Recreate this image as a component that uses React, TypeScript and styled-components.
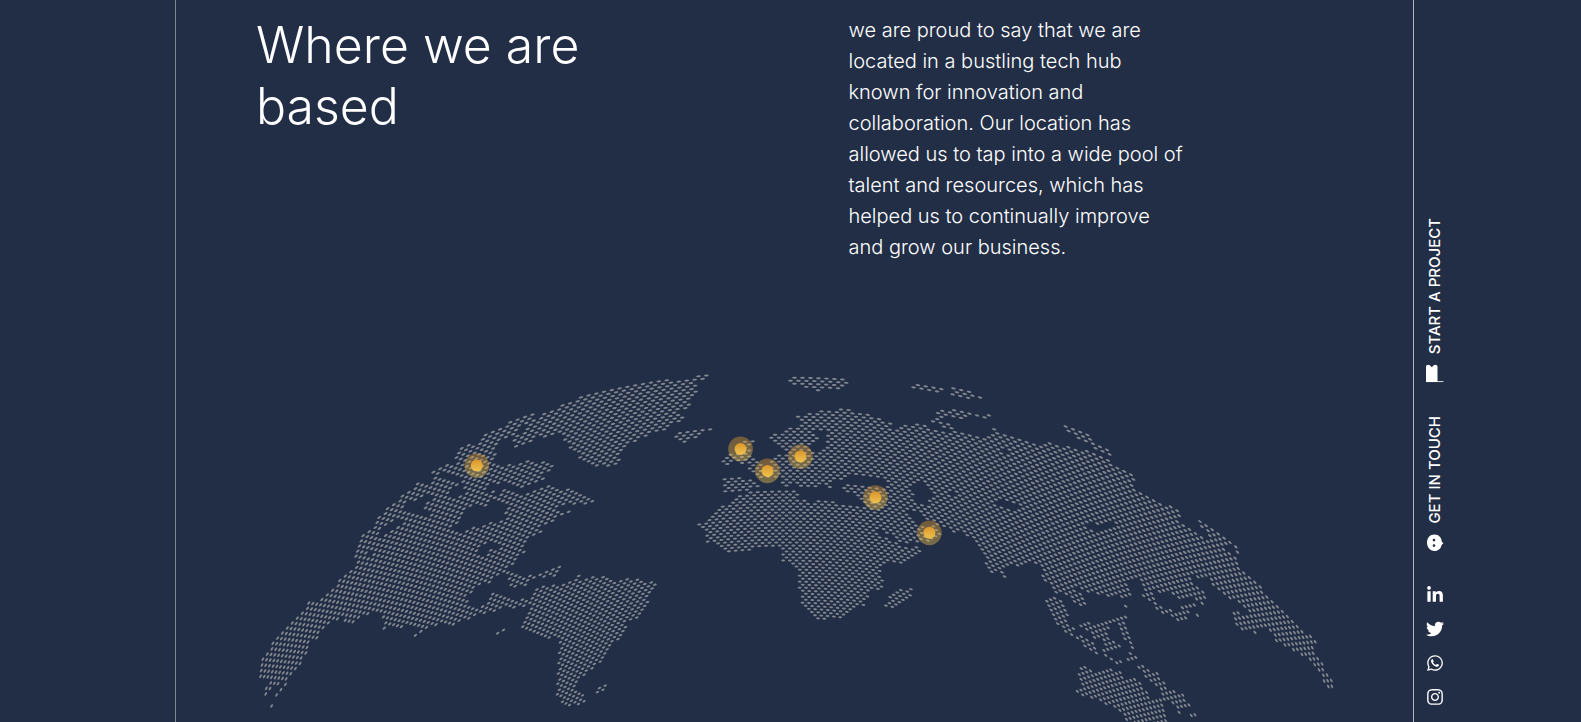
import React from "react";
import styled, { createGlobalStyle } from "styled-components";
import { FaLinkedinIn, FaTwitter, FaWhatsapp, FaInstagram } from "react-icons/fa";

type Point = [number, number];

const GlobalStyle = createGlobalStyle`
  *, *::before, *::after { box-sizing: border-box; }
  body {
    margin: 0;
    background: #222e46;
    color: #fff;
    font-family: Inter, "Liberation Sans", sans-serif;
  }
`;

const Page = styled.div`
  display: grid;
  grid-template-columns: 175px minmax(0, 1fr) 167px;
  min-height: 100vh;
`;

const Section = styled.main`
  grid-column: 2;
  display: flex;
  flex-direction: column;
  justify-content: space-between;
  gap: 96px;
  padding-top: 15px;
  border-left: 1px solid #7d8493;
  border-right: 1px solid #b0b5be;
`;

const Intro = styled.div`
  display: grid;
  grid-template-columns: 1fr 1fr;
  gap: 108px;
  padding: 0 80px;
`;

const Title = styled.h2`
  max-width: 400px;
  margin: 0;
  font-size: 50px;
  font-weight: 300;
  line-height: 61px;
`;

const Copy = styled.p`
  max-width: 336px;
  margin: 0;
  font-size: 20px;
  font-weight: 300;
  line-height: 31px;
`;

const MapBox = styled.svg`
  display: block;
  margin: 0 64px;
`;

const Rail = styled.aside`
  position: sticky;
  top: 0;
  height: 100vh;
  display: flex;
  flex-direction: column;
  justify-content: flex-end;
  align-items: flex-start;
  gap: 34px;
  padding: 0 0 16px 12px;
`;

const RailLink = styled.a`
  display: flex;
  align-items: center;
  gap: 10px;
  writing-mode: vertical-rl;
  transform: rotate(180deg);
  color: #fff;
  font-size: 15px;
  font-weight: 500;
  line-height: 18px;
  text-decoration: none;
`;

const Socials = styled.nav`
  display: flex;
  flex-direction: column;
  gap: 16px;
`;

const Social = styled.a`
  display: flex;
  color: #fff;
  font-size: 18px;
`;

/* The map is drawn in thirds of a pixel: a staggered grid bent over a globe. */
const MAP_W = 3330;
const MAP_H = 1086;
const CENTER_X = 1641;
const STEP = 0.0117;
const ROW = 9;
const BEND = 1680;
const DOT = 0.3;

const land: Point[][] = [
  [[60,905],[85,868],[105,833],[135,810],[165,776],[198,742],[208,723],[228,726],[245,708],[276,693],[285,673],[308,643],[330,628],[350,612],[358,598],[348,590],[343,570],[363,545],[360,535],[370,518],[390,506],[412,478],[440,448],[465,431],[485,405],[512,388],[535,362],[545,362],[550,375],[575,366],[584,352],[576,342],[590,323],[610,312],[645,314],[636,290],[665,261],[690,250],[715,257],[718,228],[765,204],[790,210],[810,186],[840,175],[877,157],[890,170],[835,207],[812,234],[782,260],[760,292],[752,312],[800,318],[845,304],[875,300],[898,304],[945,310],[948,316],[915,342],[920,362],[880,370],[852,382],[830,374],[800,378],[805,384],[840,398],[880,398],[905,378],[945,376],[980,387],[1015,403],[1064,422],[1050,434],[1005,432],[960,442],[950,458],[985,452],[990,460],[960,472],[938,490],[912,492],[902,522],[872,537],[858,550],[855,580],[828,597],[820,612],[802,634],[785,645],[740,672],[700,690],[685,712],[687,738],[712,742],[748,722],[740,706],[765,692],[782,698],[795,708],[818,706],[828,724],[855,718],[872,728],[870,735],[820,748],[790,745],[720,766],[680,782],[640,795],[580,797],[560,806],[530,836],[517,836],[540,812],[538,804],[440,799],[432,812],[426,810],[430,767],[380,762],[360,774],[330,792],[314,792],[314,780],[290,777],[270,792],[250,810],[240,827],[205,857],[198,890],[180,912],[165,928],[147,950],[142,975],[123,1000],[108,1015],[90,1052],[84,1050],[106,1005],[126,985],[128,965],[92,990],[75,1006],[72,1000],[85,968],[62,962],[50,980]],
  [[860,205],[880,180],[910,154],[940,150],[980,129],[1055,96],[1130,76],[1163,60],[1234,45],[1274,48],[1295,63],[1330,65],[1365,50],[1418,44],[1424,50],[1378,60],[1376,92],[1362,118],[1342,142],[1318,158],[1334,165],[1325,182],[1292,195],[1278,207],[1220,230],[1182,245],[1160,260],[1142,290],[1134,314],[1105,322],[1066,322],[1028,304],[1012,280],[988,272],[982,245],[960,226],[920,230],[890,232],[865,254],[824,260],[815,242]],
  [[780,622],[830,636],[870,648],[905,638],[935,630],[962,620],[968,628],[945,648],[900,656],[870,665],[850,682],[800,682],[810,655],[780,645]],
  [[870,725],[890,688],[930,673],[965,675],[980,663],[1000,658],[1003,643],[1015,643],[1025,663],[1063,650],[1095,648],[1130,660],[1165,653],[1200,655],[1225,663],[1262,670],[1247,690],[1232,705],[1226,740],[1202,772],[1165,786],[1157,815],[1127,847],[1100,882],[1087,902],[1060,922],[1047,942],[1020,956],[1012,990],[1042,1015],[1032,1037],[968,1042],[963,1012],[948,1000],[953,970],[948,945],[958,920],[953,890],[958,850],[953,834],[925,835],[880,820],[841,804],[853,775],[868,745]],
  [[762,825],[782,806],[792,810],[778,830]],
  [[1070,1000],[1080,980],[1108,970],[1108,980],[1082,1000]],
  [[1300,222],[1320,210],[1350,215],[1385,200],[1414,208],[1375,234],[1335,246],[1300,230]],
  [[1445,318],[1448,298],[1475,283],[1502,300],[1480,312]],
  [[1495,250],[1538,232],[1545,238],[1530,258],[1542,288],[1567,300],[1577,325],[1560,347],[1513,327],[1528,312],[1495,314]],
  [[1453,355],[1470,352],[1550,357],[1560,375],[1545,387],[1530,397],[1460,399],[1451,387]],
  [[1470,425],[1500,403],[1560,393],[1672,391],[1676,420],[1720,424],[1780,418],[1800,434],[1860,434],[1882,442],[1900,475],[1910,500],[1925,520],[1945,540],[1980,546],[1990,566],[2045,560],[2042,576],[2010,604],[2005,610],[1960,607],[1930,627],[1922,640],[1933,660],[1926,682],[1892,702],[1877,732],[1840,759],[1800,777],[1728,780],[1708,757],[1688,742],[1688,702],[1668,686],[1678,640],[1658,620],[1625,600],[1625,575],[1610,562],[1560,565],[1520,577],[1475,579],[1430,562],[1398,542],[1405,515],[1374,495],[1415,475],[1420,452]],
  [[1588,222],[1645,210],[1678,190],[1675,166],[1720,158],[1770,150],[1815,143],[1850,153],[1895,168],[1950,183],[1958,203],[1978,207],[1982,190],[2020,193],[2048,190],[2070,205],[2100,212],[2150,213],[2210,226],[2240,231],[2258,222],[2246,203],[2280,210],[2310,230],[2360,238],[2400,250],[2435,243],[2470,258],[2500,258],[2540,273],[2580,284],[2612,302],[2645,325],[2690,345],[2694,358],[2680,375],[2705,393],[2732,405],[2747,427],[2770,428],[2805,445],[2823,460],[2827,490],[2845,496],[2868,514],[2892,533],[2940,545],[2960,568],[2998,598],[3007,625],[3042,658],[3067,683],[3092,713],[3122,743],[3162,783],[3192,815],[3230,833],[3247,860],[3225,855],[3228,880],[3248,905],[3254,930],[3283,960],[3278,998],[3260,985],[3248,955],[3228,925],[3213,900],[3190,897],[3172,877],[3150,862],[3108,842],[3098,815],[3065,807],[3050,822],[3038,810],[2988,807],[2978,770],[2990,753],[3030,763],[3028,745],[2988,727],[2963,707],[2930,682],[2910,662],[2880,654],[2860,645],[2857,670],[2882,680],[2898,700],[2895,737],[2870,717],[2820,714],[2785,698],[2735,692],[2745,715],[2760,740],[2800,750],[2820,757],[2830,732],[2875,728],[2875,740],[2855,755],[2885,758],[2885,768],[2845,768],[2830,788],[2790,765],[2745,750],[2730,722],[2710,710],[2715,680],[2695,655],[2675,660],[2662,680],[2678,703],[2620,718],[2600,705],[2548,702],[2530,712],[2550,738],[2540,744],[2500,732],[2482,705],[2450,702],[2443,687],[2418,667],[2408,640],[2398,615],[2370,607],[2315,622],[2290,632],[2304,655],[2290,664],[2278,642],[2248,642],[2243,615],[2223,577],[2188,532],[2173,517],[2150,522],[2130,507],[2095,497],[2105,525],[2060,545],[1985,552],[1950,527],[1920,502],[1902,472],[1878,450],[1860,425],[1840,402],[1810,392],[1812,372],[1840,368],[1825,358],[1775,368],[1795,390],[1775,390],[1740,376],[1715,385],[1680,388],[1680,370],[1630,380],[1620,350],[1560,352],[1570,330],[1590,315],[1598,290],[1640,277],[1622,262],[1600,252],[1588,240]],
  [[2062,180],[2110,150],[2155,148],[2185,156],[2270,168],[2268,178],[2230,176],[2180,168],[2170,180],[2130,166],[2110,180],[2140,202],[2155,212],[2120,206],[2090,188]],
  [[1648,58],[1675,46],[1835,54],[1825,66],[1812,87],[1730,92],[1670,76]],
  [[2010,66],[2085,78],[2155,84],[2200,96],[2240,112],[2242,121],[2170,115],[2140,108],[2130,90],[2090,97],[2025,86]],
  [[2470,194],[2550,224],[2582,255],[2622,273],[2628,295],[2590,285],[2560,260],[2515,240],[2488,217]],
  [[2878,472],[2930,506],[2972,536],[3000,568],[3022,590],[3005,586],[2970,555],[2950,560],[2895,545],[2910,520],[2886,500]],
  [[1980,683],[2022,688],[2007,722],[1970,748],[1933,736],[1953,705]],
  [[2415,730],[2435,706],[2462,712],[2475,745],[2492,757],[2487,790],[2507,800],[2507,822],[2540,835],[2582,867],[2575,884],[2500,835],[2468,808],[2436,770]],
  [[2588,880],[2615,890],[2650,905],[2630,915],[2595,895]],
  [[2510,785],[2570,792],[2630,775],[2660,762],[2660,782],[2605,805],[2600,835],[2570,838],[2535,812]],
  [[2585,840],[2610,835],[2650,860],[2640,872],[2595,885]],
  [[2630,800],[2655,785],[2670,828],[2688,855],[2680,875],[2695,902],[2662,908],[2672,860],[2645,825]],
  [[2635,735],[2675,730],[2660,744]],
  [[2695,900],[2760,945],[2790,985],[2835,1008],[2855,1040],[2820,1062],[2800,1035],[2760,1020],[2765,990],[2730,970],[2700,930]],
  [[2850,1060],[2878,1062],[2876,1080],[2856,1080]],
  [[2512,945],[2530,917],[2550,933],[2600,928],[2640,933],[2660,953],[2695,960],[2727,995],[2735,1030],[2750,1012],[2772,1040],[2795,1100],[2675,1100],[2638,1052],[2590,1027],[2540,1012],[2505,990],[2525,975]],
];

const water: Point[][] = [
  [[640,505],[665,470],[695,440],[745,442],[765,415],[775,395],[745,395],[750,372],[795,372],[800,382],[778,390],[775,420],[800,440],[798,480],[750,486],[720,500],[690,502],[665,515]],
  [[630,385],[668,375],[665,395],[690,405],[650,412],[628,402]],
  [[600,345],[640,340],[662,350],[655,370],[630,358],[600,356]],
  [[480,455],[500,430],[535,420],[575,405],[590,412],[545,440],[548,452],[590,455],[540,470]],
  [[420,512],[436,500],[480,480],[500,488],[440,520],[410,530]],
  [[390,575],[420,570],[415,580],[390,588]],
  [[708,580],[730,555],[762,545],[790,560],[745,570],[730,590]],
  [[780,238],[810,232],[820,262],[800,315],[762,305],[768,280]],
  [[1732,216],[1762,212],[1762,268],[1730,278],[1695,258],[1735,242]],
  [[1825,356],[1850,343],[1900,350],[1935,358],[1938,382],[1900,376],[1865,372],[1830,368]],
  [[2018,372],[2055,370],[2062,385],[2078,405],[2062,432],[2030,438],[2025,410],[2010,390]],
  [[2008,455],[2025,450],[2050,478],[2090,492],[2090,500],[2040,492],[2020,478]],
  [[2255,425],[2300,422],[2335,440],[2325,448],[2290,440],[2262,434]],
  [[2530,490],[2560,488],[2575,495],[2625,490],[2600,512],[2575,514],[2555,505]],
  [[2280,268],[2300,264],[2306,278],[2285,280]],
  [[2120,395],[2142,390],[2148,402],[2125,405]],
  [[2515,688],[2540,684],[2545,698],[2520,700]],
];

const inside = ([x, y]: Point, shape: Point[]) => {
  let hit = false;
  for (let i = 0, j = shape.length - 1; i < shape.length; j = i++) {
    const [xi, yi] = shape[i];
    const [xj, yj] = shape[j];
    if (yi > y !== yj > y && x < ((xj - xi) * (y - yi)) / (yj - yi) + xi) hit = !hit;
  }
  return hit;
};

const buildDots = () => {
  const parts: string[] = [];
  for (let row = 0; row < 125; row++) {
    const base = 35 + row * ROW;
    const radius = 2082 - 0.6 * base;
    for (let col = -105; col <= 105; col++) {
      const angle = (col + (row % 2) / 2) * STEP;
      const sin = Math.sin(angle);
      const cos = Math.cos(angle);
      const x = CENTER_X + radius * sin;
      const y = base + BEND * (1 - cos);
      const spot: Point = [x, y];
      if (y > MAP_H + 10 || !land.some((s) => inside(spot, s)) || water.some((s) => inside(spot, s))) continue;
      const ax = radius * STEP * cos * DOT;
      const ay = BEND * STEP * sin * DOT;
      const bx = (-0.6 * ROW * sin * DOT) / 0.866;
      const by = (ROW * DOT) / 0.866;
      const ring = Array.from({ length: 10 }, (_, k) => {
        const t = (k * Math.PI) / 5;
        const px = x + ax * Math.cos(t) + bx * Math.sin(t);
        const py = y + ay * Math.cos(t) + by * Math.sin(t);
        return `${px.toFixed(1)} ${py.toFixed(1)}`;
      });
      parts.push(`M${ring.join("L")}Z`);
    }
  }
  return parts.join("");
};

const dots = buildDots();

const offices: Point[] = [[711,317],[1503,267],[1584,333],[1683,290],[1908,413],[2070,519]];

const WorldMap = () => (
  <MapBox viewBox={`0 0 ${MAP_W} ${MAP_H}`} role="img" aria-label="Office locations">
    <defs>
      <linearGradient id="pin" x1="0" y1="0" x2="0" y2="1">
        <stop offset="0" stopColor="#dc962b" />
        <stop offset="1" stopColor="#edc350" />
      </linearGradient>
    </defs>
    <path d={dots} fill="#80868f" />
    {offices.map(([x, y]) => (
      <g key={x} fill="url(#pin)">
        <circle cx={x} cy={y} r="37" opacity="0.42" />
        <circle cx={x} cy={y} r="18" />
      </g>
    ))}
  </MapBox>
);

const BookIcon = () => (
  <svg width="18" height="18" viewBox="0 0 18 18" fill="#fff" aria-hidden="true">
    <path d="M0 2.5Q0 1 1.500 .5L3.500 .8L5.800 3L8 .8L10 .5Q11.500 1 11.500 2.500V17H17.500V18H0Z" />
  </svg>
);

const ChatIcon = () => (
  <svg width="18" height="18" viewBox="0 0 18 18" aria-hidden="true">
    <path fill="#fff" d="M8.500 1C13 1 15.700 4.300 15.800 8.500L17.500 9.500L15.600 11.500C14.800 15 12.500 17.500 8.500 17.500C4 17.500 1 13.500 1 9.200C1 4.500 4 1 8.500 1Z" />
    <circle cx="8" cy="6.500" r="1.300" fill="#222e46" />
    <circle cx="8" cy="12" r="1.300" fill="#222e46" />
  </svg>
);

const Upright = styled.span`
  display: flex;
  transform: rotate(180deg);
`;

export default function App() {
  return (
    <>
      <GlobalStyle />
      <Page>
        <Section>
          <Intro>
            <Title>Where we are based</Title>
            <Copy>
              we are proud to say that we are located in a bustling tech hub known for innovation and
              collaboration. Our location has allowed us to tap into a wide pool of talent and resources,
              which has helped us to continually improve and grow our business.
            </Copy>
          </Intro>
          <WorldMap />
        </Section>
        <Rail>
          <RailLink href="#project">
            <Upright><BookIcon /></Upright>
            START A PROJECT
          </RailLink>
          <RailLink href="#contact">
            <Upright><ChatIcon /></Upright>
            GET IN TOUCH
          </RailLink>
          <Socials aria-label="Social media">
            <Social href="#linkedin" aria-label="LinkedIn"><FaLinkedinIn /></Social>
            <Social href="#twitter" aria-label="Twitter"><FaTwitter /></Social>
            <Social href="#whatsapp" aria-label="WhatsApp"><FaWhatsapp /></Social>
            <Social href="#instagram" aria-label="Instagram"><FaInstagram /></Social>
          </Socials>
        </Rail>
      </Page>
    </>
  );
}
